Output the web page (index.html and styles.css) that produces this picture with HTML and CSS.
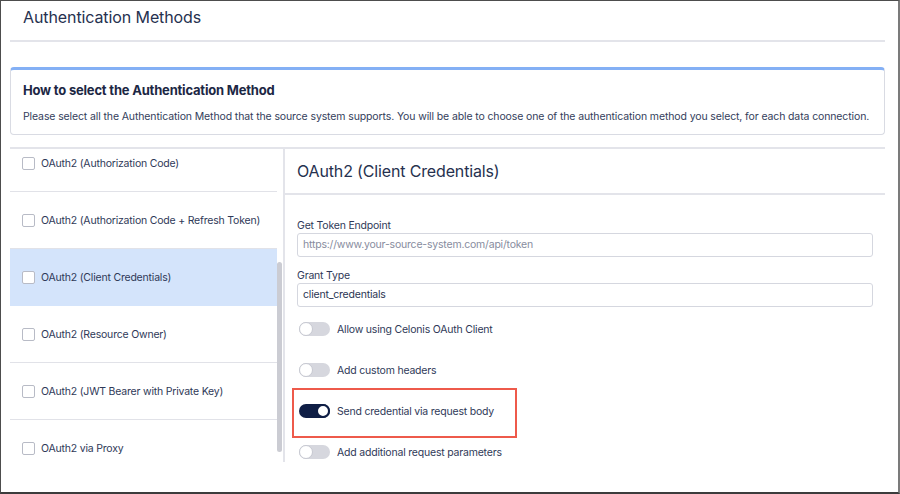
FILE: index.html
```html
<!DOCTYPE html>
<html lang="en">
<head>
<meta charset="utf-8">
<title>Authentication Methods</title>
<link rel="stylesheet" href="styles.css">
</head>
<body>
<div class="frame">
  <header class="page-header"><h1>Authentication Methods</h1></header>
  <section class="info">
    <h2>How to select the Authentication Method</h2>
    <p>Please select all the Authentication Method that the source system supports. You will be able to choose one of the authentication method you select, for each data connection.</p>
  </section>
  <div class="split">
    <div class="methods">
      <ul class="method-list">
        <li class="method"><span class="checkbox"></span><span>OAuth2 (Authorization Code)</span></li>
        <li class="method"><span class="checkbox"></span><span>OAuth2 (Authorization Code + Refresh Token)</span></li>
        <li class="method selected"><span class="checkbox"></span><span>OAuth2 (Client Credentials)</span></li>
        <li class="method"><span class="checkbox"></span><span>OAuth2 (Resource Owner)</span></li>
        <li class="method"><span class="checkbox"></span><span>OAuth2 (JWT Bearer with Private Key)</span></li>
        <li class="method"><span class="checkbox"></span><span>OAuth2 via Proxy</span></li>
      </ul>
    </div>
    <div class="scroll-track"><div class="scroll-thumb"></div></div>
    <div class="detail">
      <div class="detail-head"><h3>OAuth2 (Client Credentials)</h3></div>
      <div class="detail-body">
        <label class="field-label">Get Token Endpoint</label>
        <div class="input placeholder">https://www.your-source-system.com/api/token</div>
        <label class="field-label second">Grant Type</label>
        <div class="input">client_credentials</div>
        <div class="toggles">
          <div class="toggle-row"><span class="toggle"><span class="knob"></span></span><span>Allow using Celonis OAuth Client</span></div>
          <div class="toggle-row"><span class="toggle"><span class="knob"></span></span><span>Add custom headers</span></div>
          <div class="toggle-row highlight"><span class="toggle on"><span class="knob"></span></span><span>Send credential via request body</span></div>
          <div class="toggle-row"><span class="toggle"><span class="knob"></span></span><span>Add additional request parameters</span></div>
        </div>
      </div>
    </div>
  </div>
</div>
</body>
</html>
```
FILE: styles.css
```css
* { box-sizing: border-box; }
body {
  margin: 0;
  font-family: Inter, "Noto Sans", sans-serif;
  color: #2f3958;
  background: #fff;
}
.frame {
  width: 900px;
  height: 494px;
  border-top: 1px solid #4d4d4d;
  border-left: 1px solid #4d4d4d;
  border-right: 2px solid #7b7b7b;
  border-bottom: 2px solid #3c3c3c;
  padding: 0 13px 0 9px;
  overflow: hidden;
}
.page-header {
  padding: 5px 0 12px 13px;
  border-bottom: 2px solid #e3e4ea;
}
.page-header h1 {
  margin: 0;
  font-size: 16px;
  line-height: 22px;
  letter-spacing: -0.1px;
  font-weight: 400;
  color: #26314f;
}
.info {
  margin-top: 25px;
  border: 1px solid #d9dbe3;
  border-top: 3px solid #84b0f5;
  border-radius: 4px;
  padding: 12px 12px 10px;
}
.info h2 {
  margin: 0;
  font-size: 13px;
  line-height: 16px;
  letter-spacing: -0.2px;
  font-weight: 700;
  color: #1c2744;
}
.info p {
  margin: 12px 0 0;
  font-size: 10.5px;
  line-height: 14px;
  letter-spacing: -0.12px;
  white-space: nowrap;
  color: #333d5b;
}
.split {
  margin-top: 12px;
  border-top: 2px solid #e3e4ea;
  height: 315px;
  display: flex;
}
.methods {
  width: 267px;
  flex: none;
  overflow: hidden;
}
.method-list {
  list-style: none;
  margin: -14px 0 0;
  padding: 0;
}
.method {
  height: 57px;
  display: flex;
  align-items: center;
  gap: 6px;
  padding-left: 12px;
  border-bottom: 1px solid #e1e2e8;
  font-size: 10.5px;
  letter-spacing: -0.2px;
  white-space: nowrap;
  color: #2f3958;
}
.method.selected {
  background: #d4e4fb;
  border-bottom-color: #d4e4fb;
}
.checkbox {
  width: 13px;
  height: 13px;
  flex: none;
  border: 1px solid #b8bbc6;
  border-radius: 2px;
  background: #fff;
}
.scroll-track {
  width: 6px;
  flex: none;
  padding-top: 113px;
}
.scroll-thumb {
  width: 5px;
  height: 190px;
  background: #cbccd3;
  border-radius: 3px;
}
.detail {
  flex: 1;
  border-left: 2px solid #e3e4ea;
  overflow: hidden;
}
.detail-head {
  padding: 12px;
  border-bottom: 2px solid #e3e4ea;
}
.detail-head h3 {
  margin: 0;
  font-size: 16px;
  line-height: 20px;
  letter-spacing: -0.15px;
  font-weight: 400;
  color: #26314f;
}
.detail-body {
  padding: 24px 12px 0;
}
.field-label {
  display: block;
  font-size: 10.5px;
  line-height: 14px;
  letter-spacing: -0.2px;
  color: #2f3958;
}
.field-label.second { margin-top: 12px; }
.input {
  height: 24px;
  border: 1px solid #d5d7df;
  border-radius: 3px;
  padding: 0 5px;
  font-size: 10.5px;
  line-height: 22px;
  letter-spacing: -0.2px;
  color: #2a3452;
}
.input.placeholder { color: #878c9e; }
.toggles {
  margin-top: 15px;
  display: flex;
  flex-direction: column;
  gap: 27px;
}
.toggle-row {
  position: relative;
  display: flex;
  align-items: center;
  gap: 7px;
  height: 14px;
  padding-left: 2px;
  font-size: 10.5px;
  letter-spacing: -0.2px;
  color: #2f3958;
}
.toggle {
  width: 31px;
  height: 14px;
  flex: none;
  display: flex;
  align-items: center;
  border-radius: 7px;
  background: #d6d7de;
}
.knob {
  width: 14px;
  height: 14px;
  border-radius: 50%;
  background: #fff;
  border: 1px solid #c6c8d1;
}
.toggle.on {
  background: #0f1e45;
  justify-content: flex-end;
}
.toggle.on .knob {
  border: 2px solid #0f1e45;
}
.toggle-row.highlight::after {
  content: "";
  position: absolute;
  left: -5px;
  top: -16px;
  width: 221px;
  height: 46px;
  border: 2px solid #ee5a4b;
}
```
